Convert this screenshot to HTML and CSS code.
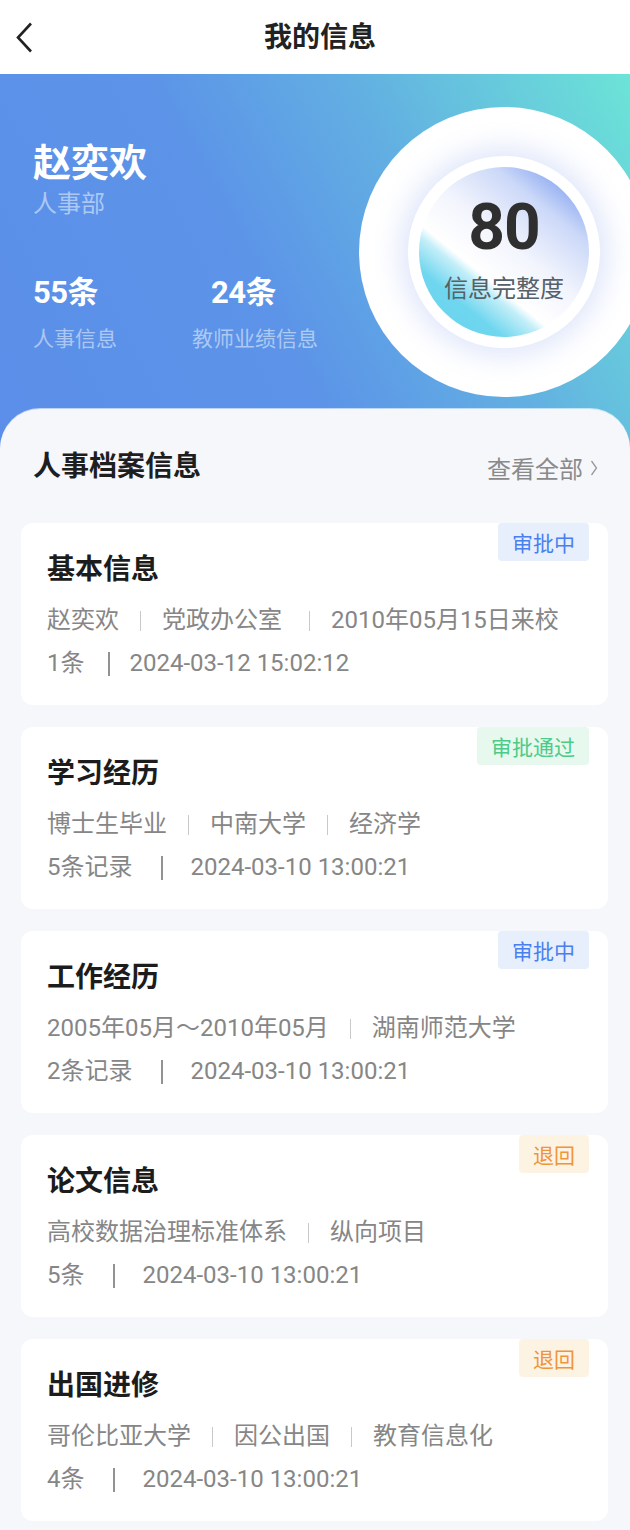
FILE: index.html
```html
<!DOCTYPE html>
<html lang="zh-CN">
<head>
    <meta charset="UTF-8">
    <meta name="viewport" content="width=device-width, initial-scale=1.0">
    <title>我的信息</title>
    <link rel="stylesheet" href="styles.css">
</head>
<body>
    <header class="topbar">
        <a class="back" href="#">
            <svg width="17" height="31" viewBox="0 0 17 31"><polyline points="15,1.5 2,15.5 15,29.5" fill="none" stroke="#222" stroke-width="2.6" stroke-linejoin="miter"/></svg>
        </a>
        <h1 class="title">我的信息</h1>
        <span></span>
    </header>

    <section class="banner">
        <div class="profile">
            <div class="name">赵奕欢</div>
            <div class="dept">人事部</div>
            <div class="stats">
                <div class="stat">
                    <div class="stat-num">55条</div>
                    <div class="stat-label">人事信息</div>
                </div>
                <div class="stat stat-alt">
                    <div class="stat-num">24条</div>
                    <div class="stat-label">教师业绩信息</div>
                </div>
            </div>
        </div>
        <div class="ring-outer">
            <div class="ring-inner">
                <div class="ring-core">
                    <div class="score">80</div>
                    <div class="score-label">信息完整度</div>
                </div>
            </div>
        </div>
    </section>

    <main class="sheet">
        <div class="sheet-head">
            <h2 class="sheet-title">人事档案信息</h2>
            <a class="more" href="#">查看全部
                <svg width="8" height="16" viewBox="0 0 8 16"><polyline points="1.5,1 6.5,8 1.5,15" fill="none" stroke="#999" stroke-width="1.3"/></svg>
            </a>
        </div>

        <div class="cards">
            <div class="card">
                <span class="tag tag-pending">审批中</span>
                <div class="card-title">基本信息</div>
                <div class="row"><span>赵奕欢</span><i class="sep"></i><span>党政办公室&nbsp;</span><i class="sep"></i><span>2010年05月15日来校</span></div>
                <div class="row"><span>1条</span><i class="sep-dark sep-tight"></i><span>2024-03-12 15:02:12</span></div>
            </div>

            <div class="card">
                <span class="tag tag-pass">审批通过</span>
                <div class="card-title">学习经历</div>
                <div class="row"><span>博士生毕业</span><i class="sep"></i><span>中南大学</span><i class="sep"></i><span>经济学</span></div>
                <div class="row"><span>5条记录</span><i class="sep-dark"></i><span>2024-03-10 13:00:21</span></div>
            </div>

            <div class="card">
                <span class="tag tag-pending">审批中</span>
                <div class="card-title">工作经历</div>
                <div class="row"><span>2005年05月～2010年05月</span><i class="sep"></i><span>湖南师范大学</span></div>
                <div class="row"><span>2条记录</span><i class="sep-dark"></i><span>2024-03-10 13:00:21</span></div>
            </div>

            <div class="card">
                <span class="tag tag-back">退回</span>
                <div class="card-title">论文信息</div>
                <div class="row"><span>高校数据治理标准体系</span><i class="sep"></i><span>纵向项目</span></div>
                <div class="row"><span>5条</span><i class="sep-dark"></i><span>2024-03-10 13:00:21</span></div>
            </div>

            <div class="card">
                <span class="tag tag-back">退回</span>
                <div class="card-title">出国进修</div>
                <div class="row"><span>哥伦比亚大学</span><i class="sep"></i><span>因公出国</span><i class="sep"></i><span>教育信息化</span></div>
                <div class="row"><span>4条</span><i class="sep-dark"></i><span>2024-03-10 13:00:21</span></div>
            </div>
        </div>
    </main>
</body>
</html>
```

FILE: styles.css
```css
body {
    margin: 0;
    font-family: "Noto Sans CJK SC", sans-serif;
    background: #f5f7fb;
    color: #222;
}
.topbar {
    height: 74px;
    background: #fff;
    display: grid;
    grid-template-columns: 1fr auto 1fr;
    align-items: center;
}
.back {
    display: flex;
    padding-left: 16px;
    margin-top: 1px;
}
.title {
    margin: 0;
    font-size: 28px;
    line-height: 36px;
    font-weight: 700;
    color: #222;
    margin-top: -4px;
    padding-left: 10px;
}

.banner {
    height: 376px;
    overflow: hidden;
    display: flex;
    align-items: flex-start;
    padding-left: 33px;
    background: linear-gradient(62deg, #5b8ee8 0%, #5c94e8 42%, #62afe2 66%, #6ce4d7 100%);
}
.profile {
    padding-top: 63px;
}
.name {
    font-size: 38px;
    line-height: 46px;
    font-weight: 700;
    color: #fff;
}
.dept {
    margin-top: 4px;
    font-size: 24px;
    line-height: 30px;
    color: rgba(255, 255, 255, 0.5);
}
.stats {
    display: flex;
    margin-top: 58px;
}
.stat { width: 159px; }
.stat-alt { width: auto; }
.stat-alt .stat-num { padding-left: 19px; }
.stat-num {
    font-family: Roboto, "Noto Sans CJK SC", sans-serif;
    font-size: 31px;
    line-height: 36px;
    font-weight: 700;
    color: #fff;
    letter-spacing: -0.5px;
}
.stat-label {
    margin-top: 12px;
    font-size: 21px;
    line-height: 28px;
    color: rgba(255, 255, 255, 0.5);
}

.ring-outer {
    flex-shrink: 0;
    width: 290px;
    height: 290px;
    margin: 33px -19px 0 auto;
    border-radius: 50%;
    background: #fff;
    display: flex;
    align-items: center;
    justify-content: center;
}
.ring-inner {
    width: 192px;
    height: 192px;
    border-radius: 50%;
    background: #fff;
    box-shadow: 0 0 28px 8px rgba(96, 132, 232, 0.2);
    display: flex;
    align-items: center;
    justify-content: center;
}
.ring-core {
    width: 170px;
    height: 170px;
    border-radius: 50%;
    box-sizing: border-box;
    padding-bottom: 6px;
    background: linear-gradient(39deg, #66d3ee 0%, #6fd6ef 22%, #c2eef8 33%, #ffffff 37%, #f3f5fd 54%, #cbd8f8 75%, #5b86ec 100%);
    display: flex;
    flex-direction: column;
    align-items: center;
    justify-content: center;
}
.score {
    font-family: Roboto, sans-serif;
    font-size: 64px;
    line-height: 64px;
    font-weight: 700;
    color: #2f2f2f;
    letter-spacing: -1px;
}
.score-label {
    margin-top: 12px;
    font-size: 24px;
    line-height: 30px;
    color: #566068;
}

.sheet {
    position: relative;
    margin-top: -41px;
    border-radius: 40px 40px 0 0;
    background: #f5f7fb;
    padding: 36px 22px 9px 21px;
    box-shadow: 0 -1px 0 rgba(255, 255, 255, 0.6);
}
.sheet-head {
    display: flex;
    align-items: center;
    justify-content: space-between;
    padding: 0 10px 0 12px;
}
.sheet-title {
    margin: 0;
    font-size: 28px;
    line-height: 36px;
    font-weight: 700;
    color: #1e1e1e;
}
.more {
    display: flex;
    align-items: center;
    gap: 7px;
    margin-top: 8px;
    font-size: 24px;
    line-height: 30px;
    color: #8a8a8a;
    text-decoration: none;
}

.cards {
    margin-top: 40px;
    display: flex;
    flex-direction: column;
    gap: 22px;
}
.card {
    position: relative;
    background: #fff;
    border-radius: 12px;
    padding: 26px 26px 20px;
}
.tag {
    position: absolute;
    top: 0;
    right: 19px;
    height: 38px;
    line-height: 38px;
    padding: 0 14px;
    font-size: 21px;
    border-radius: 4px;
}
.tag-pending { background: #e7eefc; color: #4a7fee; }
.tag-pass { background: #e7f8ee; color: #4ccb88; }
.tag-back { background: #fdf3e3; color: #ee953c; }

.card-title {
    font-size: 28px;
    line-height: 36px;
    font-weight: 700;
    color: #1c1c1c;
    margin-bottom: 14px;
}
.row {
    display: flex;
    align-items: center;
    font-family: Roboto, "Noto Sans CJK SC", sans-serif;
    font-size: 24px;
    line-height: 43px;
    color: #868686;
}
.sep {
    width: 1px;
    height: 20px;
    background: #c9c9c9;
    margin: 0 21px;
}
.sep-dark {
    width: 2px;
    height: 24px;
    background: #929292;
    margin: 0 28px;
}
.sep-tight { margin: 0 20px 0 23px; }
```
